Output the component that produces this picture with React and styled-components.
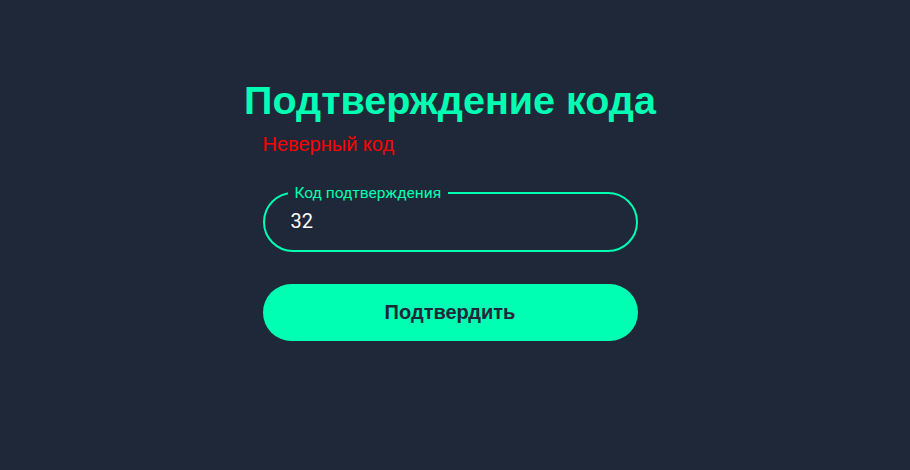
import React, { useState } from 'react';
import styled, { createGlobalStyle } from 'styled-components';

const GlobalStyle = createGlobalStyle`
  html, body {
    margin: 0;
    padding: 0;
    background: #1f2839;
    font-family: "Liberation Sans", Arial, sans-serif;
  }
`;

const Page = styled.div`
  min-height: 470px;
  display: flex;
  justify-content: center;
  padding-right: 10px;
  box-sizing: border-box;
`;

const Card = styled.div`
  width: 375px;
  padding-top: 75px;
  display: flex;
  flex-direction: column;
`;

const Title = styled.h1`
  margin: 0 -40px;
  text-align: center;
  font-size: 39.5px;
  font-weight: 700;
  line-height: 50px;
  color: #00ffb2;
`;

const ErrorText = styled.p`
  margin: 7px 0 0;
  font-size: 20px;
  line-height: 24px;
  color: #ff0000;
`;

const Field = styled.fieldset`
  margin: 28px 0 0;
  padding: 0 22px;
  height: 68px;
  box-sizing: border-box;
  border: 2px solid #00ffb2;
  border-radius: 31px;
`;

const Legend = styled.legend`
  margin-left: 1px;
  padding: 0 7px;
  font-family: Roboto, "Liberation Sans", sans-serif;
  font-size: 15.5px;
  line-height: 18px;
  color: #00ffb2;
`;

const Input = styled.input`
  display: block;
  width: 100%;
  box-sizing: border-box;
  margin: 7px 0 0;
  padding: 0 4px;
  height: 24px;
  border: none;
  outline: none;
  background: transparent;
  font-family: Roboto, "Liberation Sans", sans-serif;
  font-size: 20px;
  line-height: 24px;
  color: #ffffff;
`;

const Button = styled.button`
  margin-top: 32px;
  height: 57px;
  border: none;
  border-radius: 29px;
  background: #00ffb2;
  color: #1f2839;
  font-family: "Liberation Sans", Arial, sans-serif;
  font-size: 20px;
  font-weight: 700;
  cursor: pointer;
`;

export default function App() {
  const [code, setCode] = useState('32');

  return (
    <>
      <GlobalStyle />
      <Page>
        <Card>
          <Title>Подтверждение кода</Title>
          <ErrorText>Неверный код</ErrorText>
          <Field>
            <Legend>Код подтверждения</Legend>
            <Input value={code} onChange={e => setCode(e.target.value)} />
          </Field>
          <Button>Подтвердить</Button>
        </Card>
      </Page>
    </>
  );
}
